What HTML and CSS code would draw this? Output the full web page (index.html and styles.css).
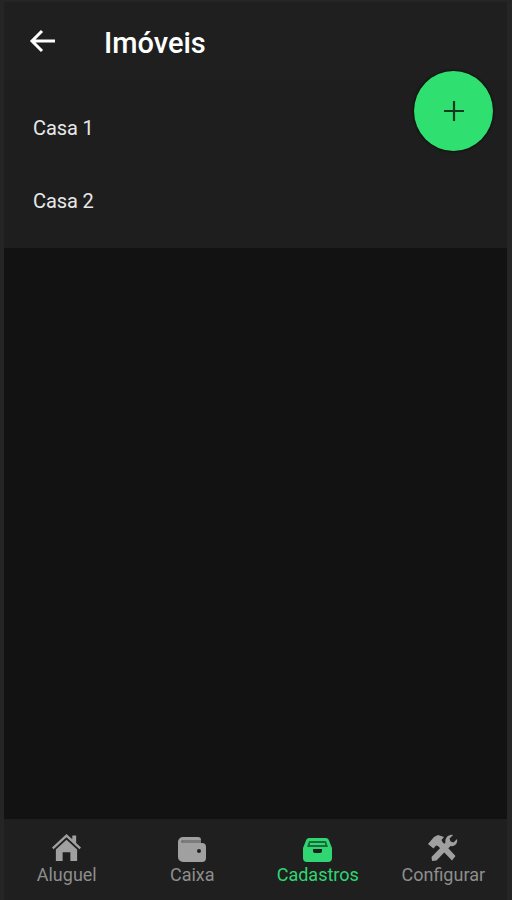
FILE: index.html
```html
<!DOCTYPE html>
<html lang="en">
<head>
    <meta charset="UTF-8">
    <meta name="viewport" content="width=device-width, initial-scale=1.0">
    <title>Imóveis</title>
    <link rel="stylesheet" href="styles.css">
</head>
<body>
    <div class="screen">
        <header class="topbar">
            <svg class="back-icon" viewBox="0 0 28 26" width="28" height="26">
                <path d="M26 13H3M13 3L3 13l10 10" fill="none" stroke="#fff" stroke-width="3"/>
            </svg>
            <h1>Imóveis</h1>
        </header>

        <!-- List of properties -->
        <ul class="list">
            <li>Casa 1</li>
            <li>Casa 2</li>
        </ul>

        <div class="fab">
            <svg viewBox="0 0 20 20" width="20" height="20">
                <path d="M10 0v20M0 10h20" fill="none" stroke="#0f3a20" stroke-width="2.200"/>
            </svg>
        </div>

        <main class="content"></main>

        <nav class="tabbar">
            <div class="tab">
                <svg viewBox="0 0 32 30" width="31" height="29">
                    <path d="M16 1L1 15l1.600 1.800L16 4.500l13.400 12.300L31 15l-5-4.700V2.500h-4v4z" fill="#a0a0a0"/>
                    <path d="M16 7L5 17v12h7v-9h8v9h7V17z" fill="#a0a0a0"/>
                </svg>
                <span>Aluguel</span>
            </div>
            <div class="tab">
                <svg viewBox="0 0 28 25" width="28" height="25">
                    <path d="M5 0h15a3 3 0 0 1 3 3H5a1.500 1.500 0 0 0 0 3h19a4 4 0 0 1 4 4v11a4 4 0 0 1-4 4H5a5 5 0 0 1-5-5V5a5 5 0 0 1 5-5z" fill="#a0a0a0"/>
                    <path d="M5 3h18v3H5a1.500 1.500 0 0 1 0-3z" fill="#7c7c7c"/>
                    <circle cx="21" cy="14" r="2" fill="#1f1f1f"/>
                </svg>
                <span>Caixa</span>
            </div>
            <div class="tab active">
                <svg viewBox="0 0 29 24" width="29" height="24">
                    <path d="M6 0h17a3 3 0 0 1 3 2.500L29 10v10a4 4 0 0 1-4 4H4a4 4 0 0 1-4-4V10L3 2.500A3 3 0 0 1 6 0z" fill="#2fd672"/>
                    <path d="M6 3h17l2 6H4z" fill="#1c6b3b"/>
                    <path d="M7 5h15v2H7z" fill="#2fd672"/>
                    <path d="M10 11h9v2a2 2 0 0 1-2 2h-5a2 2 0 0 1-2-2z" fill="#1f1f1f"/>
                </svg>
                <span>Cadastros</span>
            </div>
            <div class="tab">
                <svg viewBox="0 0 32 28" width="32" height="28">
                    <path d="M1 10l6-7 4-2 6 2-2.500 3 1 2 13 14-3.500 4.500L11 12l-2-.500-2.500 3z" fill="#a0a0a0"/>
                    <path d="M26 1l-3.500 3.500 1 3 3 1L30 5c1 4-2 8-6.500 7L9.500 26.500 5 27l-.500-4L18.500 8.500C17.500 4 22 0 26 1z" fill="#a0a0a0"/>
                </svg>
                <span>Configurar</span>
            </div>
        </nav>
    </div>
</body>
</html>
```

FILE: styles.css
```css
* {
    box-sizing: border-box;
}

body {
    margin: 0;
    background-color: #252525;
    font-family: Roboto, "Liberation Sans", sans-serif;
}

.screen {
    position: relative;
    height: 900px;
    padding: 2px 5px 0 4px;
    display: flex;
    flex-direction: column;
}

.topbar {
    height: 78px;
    padding-left: 25px;
    display: flex;
    align-items: center;
    background-color: #1f1f1f;
    color: #fff;
}

.back-icon {
    margin-top: -1px;
}

.topbar h1 {
    margin: 3px 0 0 47px;
    font-size: 29px;
    font-weight: 500;
    line-height: 34px;
}

.list {
    margin: 0;
    padding: 11px 0 11px;
    height: 168px;
    list-style: none;
    background-color: #1e1e1e;
}

.list li {
    height: 73px;
    padding-left: 29px;
    display: flex;
    align-items: center;
    color: #e8e8e8;
    font-size: 20px;
    letter-spacing: -0.1px;
}

.fab {
    position: absolute;
    left: 414px;
    top: 71px;
    width: 79px;
    height: 80px;
    border-radius: 50%;
    display: flex;
    align-items: center;
    justify-content: center;
    background-color: #2fe070;
    box-shadow: 0 0 3px #000;
}

.content {
    flex: 1;
    background-color: #121212;
}

.tabbar {
    height: 81px;
    padding: 0 1px 15px 0;
    display: grid;
    grid-template-columns: repeat(4, 1fr);
    background-color: #1f1f1f;
}

.tab {
    display: flex;
    flex-direction: column;
    align-items: center;
    justify-content: flex-end;
    gap: 3px;
    color: #8e8e8e;
    font-size: 18px;
    line-height: 20px;
}

.tab.active {
    color: #2fd672;
}
```
